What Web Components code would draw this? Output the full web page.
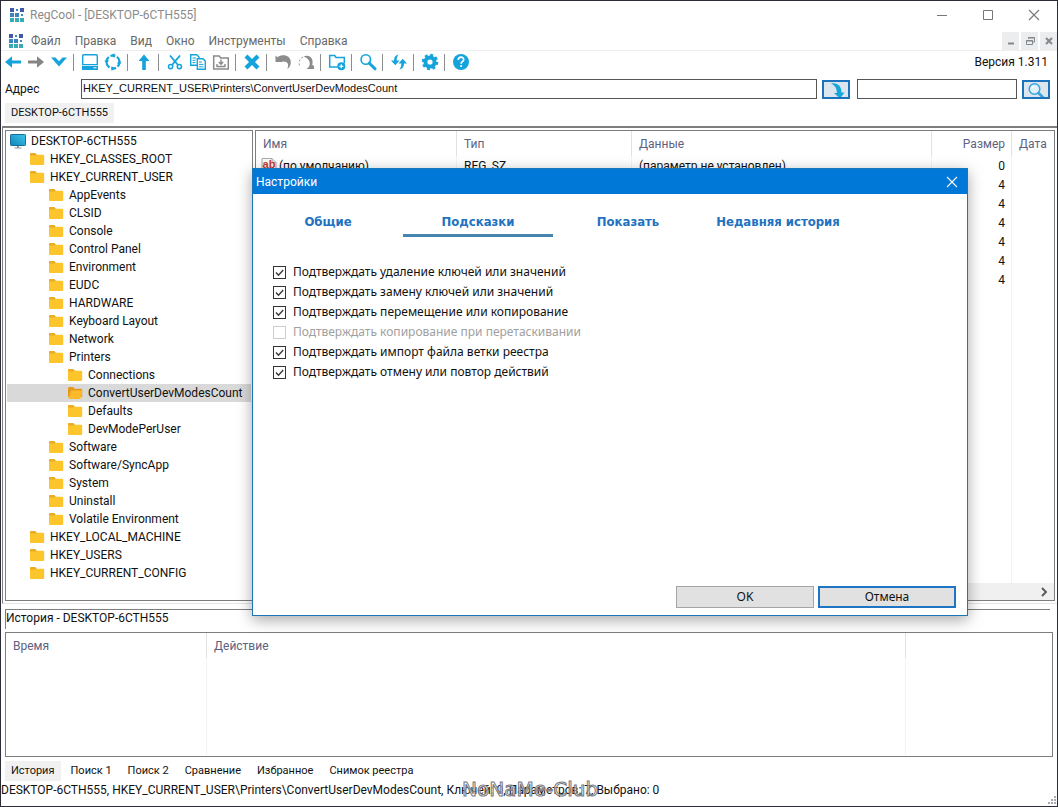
<!DOCTYPE html>
<html lang="ru">
<head>
<meta charset="utf-8">
<title>RegCool - [DESKTOP-6CTH555]</title>
<style>
  html, body { margin: 0; height: 100%; }
  body {
    --ui: Roboto, "Open Sans", sans-serif;
    --wide: "Noto Sans", "Open Sans", sans-serif;
    --classic: "Liberation Sans", Arial, sans-serif;
    --line: #7c7e80;
    --cyan: #14a3dc;
    font: 12px/18px var(--ui);
    color: #111;
    background: #fff;
  }
</style>
</head>
<body>
<reg-app></reg-app>

<script>
const define = (tag, html, setup) => {
  const template = document.createElement('template');
  template.innerHTML = html;
  customElements.define(tag, class extends HTMLElement {
    connectedCallback() {
      if (this.shadowRoot) return;
      this.attachShadow({ mode: 'open' }).append(template.content.cloneNode(true));
      if (setup) setup(this, this.shadowRoot);
    }
  });
};

/* ---------- icons ---------- */
const ICONS = {
  logo: [16, `<path d="M1 1h4v4H1zM11 1h4v4h-4z" fill="#4358a8"/><path d="M1 6h4v4H1zM6 6h4v4H6zM7 2h2v2H7zM12 7h2v2h-2z" fill="#3b86c0"/><path d="M1 11h4v4H1zM6 11h4v4H6zM11 11h4v4h-4z" fill="#38abb4"/>`],
  back: [18, `<path d="M1 9 8 3.300V7.500H17v3H8v4.200z" fill="var(--cyan)"/>`],
  forward: [18, `<path d="M17 9 10 3.300V7.500H1v3h9v4.200z" fill="#858585"/>`],
  down: [18, `<path d="M1 4.500h4.500L9 8.300 12.500 4.500H17L9 13.500z" fill="var(--cyan)"/>`],
  monitor: [18, `<rect x="1.700" y="1.700" width="14.600" height="10" rx="1" fill="#fff" stroke="var(--cyan)" stroke-width="1.400"/><path d="M1 11h16v6H1z" fill="var(--cyan)"/><path d="M1 12.500h16" stroke="#bfe6f6"/><path d="M12.500 14.800h3" stroke="#fff"/>`],
  cycle: [18, `<circle cx="9" cy="9" r="6.500" fill="none" stroke="var(--cyan)" stroke-width="2.200" stroke-dasharray="5 1.800"/><path d="m6.500 2.500 4-2.300v4.600zM15.500 6.500l2 4h-4.500zM11.500 15.500l-4 2.300v-4.600zM2.500 11.500l-2-4h4.500z" fill="var(--cyan)"/>`],
  up: [18, `<path d="m9 1.500 5.500 6.500h-3.700v9H7.200V8H3.500z" fill="var(--cyan)"/>`],
  cut: [18, `<g fill="none" stroke="var(--cyan)"><path d="M4 2.500 12 12M14 2.500 6 12" stroke-width="1.900"/><circle cx="4.600" cy="13.600" r="2.100" stroke-width="1.500"/><circle cx="13.400" cy="13.600" r="2.100" stroke-width="1.500"/></g>`],
  copy: [18, `<g fill="#fff" stroke="var(--cyan)" stroke-width="1.400"><path d="M1.700 1.700h6L10 4v8.300H1.700z"/><path d="M8.300 5.700H14L16.300 8v8.300h-8z"/></g><path d="M3.500 5h3.500M3.500 7.300h3M3.500 9.600h3M10 9h3M10 11.400h4.500M10 13.800h4.500" stroke="var(--cyan)"/>`],
  save: [18, `<path d="M1.700 3h5.500l1.500 2h7.600v11H1.700z" fill="#fff" stroke="#8a8a8a" stroke-width="1.500"/><path d="M9 6.500v4.500M6.800 9 9 11.300 11.200 9M5 11v2.500h8V11" fill="none" stroke="#8a8a8a" stroke-width="1.400"/>`],
  remove: [18, `<path d="m3 3 12 12M15 3 3 15" stroke="var(--cyan)" stroke-width="4.200"/>`],
  undo: [18, `<path d="M1.500 9V2.500L3.500 4.200C9 .5 16.800 2.500 16.800 9.500c0 3-1.300 5-3.500 6.500 2.200-5 .2-8-5.300-7.300L8.500 9z" fill="#8c8c8c"/>`],
  redo: [18, `<path d="M17 16H9.500l2.300-2C14.300 10 12 5 6.500 3.500 13 1 17 6 15.200 11.800L17 13z" fill="#8c8c8c"/><path d="M6 4C2.500 5.500 1 9.500 2.800 13.500" fill="none" stroke="#999" stroke-dasharray="2 2"/>`],
  newfolder: [18, `<path d="M9.500 14H1.700V2.500h5l1.300 2h8.300v6" fill="none" stroke="var(--cyan)" stroke-width="1.500"/><circle cx="13.300" cy="13.300" r="4" fill="var(--cyan)"/><path d="M13.300 11.300v4M11.300 13.300h4" stroke="#fff" stroke-width="1.200"/>`],
  search: [18, `<circle cx="6.800" cy="6.500" r="4.700" fill="#fff" stroke="var(--cyan)" stroke-width="1.600"/><path d="m10.300 10.200 5.700 5.600" stroke="var(--cyan)" stroke-width="3" stroke-linecap="round"/>`],
  refresh: [18, `<path d="M8.500 1.500C5.500 2 4 4.500 4 7.500H1l4.300 4.800L9.500 7.500H6.700c0-2.300.3-4 1.800-6zM9.500 16.500c3-.5 4.500-3 4.500-6h3l-4.300-4.800L8.500 10.500h2.800c0 2.300-.3 4-1.800 6z" fill="var(--cyan)"/>`],
  gear: [18, `<circle cx="9" cy="9" r="4.600" fill="none" stroke="var(--cyan)" stroke-width="4"/><circle cx="9" cy="9" r="7" fill="none" stroke="var(--cyan)" stroke-width="2.600" stroke-dasharray="2.900 2.598"/>`],
  help: [18, `<circle cx="9" cy="9" r="8" fill="var(--cyan)"/><path d="M6.300 7c0-3.800 5.600-3.600 5.400-.3-.1 2-2.600 1.900-2.600 4" fill="none" stroke="#fff" stroke-width="1.700"/><circle cx="9.100" cy="13" r="1.100" fill="#fff"/>`],
  go: [18, `<path d="M4 1.500C11 .5 14.500 4.500 14.500 10.500h3L13 16.500 7 11h2.800C10 7 8.500 3.500 4 1.500z" fill="#15a6dc"/>`],
  find: [18, `<circle cx="7.500" cy="7" r="5.300" fill="#dff1fb" stroke="#38a3df" stroke-width="1.500"/><path d="M5 6.500c.3-1.500 1.200-2.200 2.700-2.500" fill="none" stroke="#fff" stroke-width="1.200"/><path d="m11.500 11 4.500 4.500" stroke="#38a3df" stroke-width="2.600" stroke-linecap="round"/>`],
  folder: [16, `<path d="M1 3.500c0-1 .5-1.500 1.500-1.500h3.600l1.600 1.700h6c1 0 1.500.5 1.500 1.400V12.500c0 1-.5 1.500-1.500 1.500H2.500C1.500 14 1 13.500 1 12.500z" fill="#fbc52b"/><path d="M1 4c0-1.500.5-2 1.500-2h3.600l1.600 1.700L6.500 4.500H1z" fill="#e9ac25"/>`],
  folderopen: [16, `<path d="M1 3.500C1 2.500 1.500 2 2.500 2h3.600l1.600 1.700h6c1 0 1.500.5 1.500 1.400V12H1z" fill="#e8981c"/><path d="M4 5.500h11.500L14 13c-.2.700-.6 1-1.300 1H1.500z" fill="#fbb92b"/>`],
  computer: [16, `<defs><linearGradient id="s" x1="0" y1="1" x2="1" y2="0"><stop stop-color="#1287bb"/><stop offset="1" stop-color="#3cc4ea"/></linearGradient></defs><rect x=".5" y="1.500" width="15" height="11" rx=".8" fill="url(#s)" stroke="#166f96"/><path d="M7 13h2v1.500h2.500v1h-7v-1H7z" fill="#8e9ba3"/>`],
  string: [16, `<path d="M1 .500h10l4 4V15.500H1z" fill="#fafafa" stroke="#aaa"/><path d="M11 .500v4h4" fill="#ddd" stroke="#aaa"/>`],
  min: [12, `<path d="M1 6.500h10" stroke="#777"/>`],
  max: [12, `<path d="M1.500 1.500h9v9h-9z" fill="none" stroke="#777"/>`],
  close: [12, `<path d="m1 1 10 10M11 1 1 11" stroke="currentColor" stroke-width="1.100"/>`],
  mdimin: [12, `<path d="M3 8.500h6" stroke="#83888c" stroke-width="2"/>`],
  mdirest: [12, `<path d="M4.500 4V2.500h6v4.500H9M4 3h7M2.500 5.500h6v4h-6zM2 6h7" fill="none" stroke="#83888c"/>`],
  mdiclose: [12, `<path d="m3 3 6 6M9 3 3 9" stroke="#83888c" stroke-width="2"/>`],
  right: [12, `<path d="m4 2 4 4-4 4" fill="none" stroke="#555" stroke-width="1.800"/>`],
  grip: [10, `<path d="M7 0h2v2H7zM7 3h2v2H7zM7 6h2v2H7zM4 3h2v2H4zM4 6h2v2H4zM1 6h2v2H1z" fill="#a9a9b2"/>`]
};
define('reg-icon', `<style>
  :host { display: inline-block; flex: none; }
  svg { display: block; }
</style>`, (el, root) => {
  const [size, body] = ICONS[el.getAttribute('name')];
  const holder = document.createElement('template');
  holder.innerHTML = `<svg width="${size}" height="${size}" viewBox="0 0 ${size} ${size}" aria-hidden="true">${body}</svg>`;
  root.append(holder.content);
});

/* ---------- title and menu ---------- */
define('title-bar', `<style>
  :host { display: flex; align-items: center; height: 28px; padding-left: 8px; color: #8b8b8b; }
  .title { flex: 1; margin-left: 5px; }
  button { display: grid; place-items: center; width: 46px; height: 28px; padding: 0; border: 0; background: none; color: #777; }
</style>
<reg-icon name="logo"></reg-icon>
<span class="title"><slot></slot></span>
<button aria-label="Свернуть"><reg-icon name="min"></reg-icon></button>
<button aria-label="Развернуть"><reg-icon name="max"></reg-icon></button>
<button aria-label="Закрыть"><reg-icon name="close"></reg-icon></button>`);

define('menu-bar', `<style>
  :host { display: flex; align-items: center; height: 19px; padding: 2px 0 0 7px; border-bottom: 1px solid #eee; color: #686868; }
  nav { display: flex; flex: 1; gap: 14px; margin-left: 7px; }
  .mdi { display: flex; gap: 2px; }
  button { font: inherit; color: inherit; border: 0; padding: 0; background: none; }
  .mdi button { display: grid; place-items: center; width: 17px; height: 18px; background: #ebedef; }
</style>
<reg-icon name="logo"></reg-icon>
<nav>
  <button>Файл</button><button>Правка</button><button>Вид</button><button>Окно</button><button>Инструменты</button><button>Справка</button>
</nav>
<div class="mdi">
  <button aria-label="Свернуть окно"><reg-icon name="mdimin"></reg-icon></button>
  <button aria-label="Восстановить окно"><reg-icon name="mdirest"></reg-icon></button>
  <button aria-label="Закрыть окно"><reg-icon name="mdiclose"></reg-icon></button>
</div>`);

/* ---------- toolbar ---------- */
define('tool-button', `<style>
  :host { display: block; }
  button { display: grid; place-items: center; width: 23px; height: 22px; padding: 0; border: 0; background: none; }
</style><button></button>`, (el, root) => {
  const button = root.querySelector('button');
  button.setAttribute('aria-label', el.getAttribute('label'));
  button.innerHTML = `<reg-icon name="${el.getAttribute('icon')}"></reg-icon>`;
});

define('tool-bar', `<style>
  :host { display: flex; align-items: center; height: 22px; padding: 0 9px 2px 0; }
  i { width: 1px; height: 17px; margin: 0 4px 0 3px; background: #8d8d8d; }
  .version { margin-left: auto; }
</style>
<tool-button icon="back" label="Назад"></tool-button>
<tool-button icon="forward" label="Вперёд"></tool-button>
<tool-button icon="down" label="Переходы"></tool-button><i></i>
<tool-button icon="monitor" label="Компьютер"></tool-button>
<tool-button icon="cycle" label="Сеть"></tool-button><i></i>
<tool-button icon="up" label="Вверх"></tool-button><i></i>
<tool-button icon="cut" label="Вырезать"></tool-button>
<tool-button icon="copy" label="Копировать"></tool-button>
<tool-button icon="save" label="Вставить"></tool-button><i></i>
<tool-button icon="remove" label="Удалить"></tool-button><i></i>
<tool-button icon="undo" label="Отменить"></tool-button>
<tool-button icon="redo" label="Повторить"></tool-button><i></i>
<tool-button icon="newfolder" label="Новый ключ"></tool-button><i></i>
<tool-button icon="search" label="Поиск"></tool-button><i></i>
<tool-button icon="refresh" label="Обновить"></tool-button><i></i>
<tool-button icon="gear" label="Настройки"></tool-button><i></i>
<tool-button icon="help" label="Справка"></tool-button>
<span class="version">Версия 1.311</span>`);

define('address-bar', `<style>
  :host { display: flex; align-items: center; height: 28px; padding: 0 7px 0 4px; }
  label { width: 76px; }
  input { box-sizing: border-box; height: 20px; min-width: 0; margin: 0; padding: 0 1px 3px; border: 1px solid #555; font: 11px/16px var(--classic); color: #111; background: #fff; }
  .path { flex: 1; }
  .find { width: 160px; margin-left: 7px; }
  button { display: grid; place-items: center; box-sizing: border-box; width: 28px; height: 19px; margin-left: 5px; padding: 0; border: 2px solid #1d73bb; background: #dce6ee; overflow: hidden; }
</style>
<label for="path">Адрес</label>
<input id="path" class="path" value="HKEY_CURRENT_USER\\Printers\\ConvertUserDevModesCount">
<button aria-label="Перейти"><reg-icon name="go"></reg-icon></button>
<input class="find" aria-label="Строка поиска">
<button aria-label="Найти"><reg-icon name="find"></reg-icon></button>`);

/* ---------- tab strip ---------- */
define('tab-strip', `<style>
  :host { display: flex; padding-left: 4px; font-size: 11px; }
  button { height: 20px; padding: 0 6px; border: 0; background: none; font: inherit; color: inherit; white-space: nowrap; }
  button[aria-selected=true] { background: #f1f1f1; }
  div { display: flex; gap: 4px; }
</style><div role="tablist"></div>`, (el, root) => {
  const list = root.querySelector('div');
  el.getAttribute('tabs').split('|').forEach((name, i) => {
    const tab = document.createElement('button');
    tab.setAttribute('role', 'tab');
    tab.setAttribute('aria-selected', i === 0);
    tab.textContent = name;
    list.append(tab);
  });
});

/* ---------- registry tree ---------- */
define('tree-item', `<style>
  :host { display: block; }
  .row { display: flex; align-items: center; gap: 5px; height: 18px; white-space: nowrap; }
  :host([selected]) .row { background: #d9d9d9; }
</style><div class="row" role="treeitem"><span></span></div><slot></slot>`, (el, root) => {
  let depth = 0;
  for (let p = el.parentElement; p && p.localName === 'tree-item'; p = p.parentElement) depth++;
  const row = root.querySelector('.row');
  row.style.paddingLeft = `${3 + depth * 19}px`;
  const icon = document.createElement('reg-icon');
  icon.setAttribute('name', el.getAttribute('icon') || 'folder');
  row.prepend(icon);
  row.querySelector('span').textContent = el.getAttribute('label');
});
const item = (label, inner = '', extra = '') => `<tree-item label="${label}" ${extra}>${inner}</tree-item>`;
define('registry-tree', `<style>
  :host { display: block; box-sizing: border-box; padding: 1px; border: 1px solid var(--line); overflow: hidden; }
</style><div role="tree">${
  item('DESKTOP-6CTH555',
    item('HKEY_CLASSES_ROOT') +
    item('HKEY_CURRENT_USER',
      ['AppEvents', 'CLSID', 'Console', 'Control Panel', 'Environment', 'EUDC', 'HARDWARE', 'Keyboard Layout', 'Network'].map(n => item(n)).join('') +
      item('Printers', item('Connections') + item('ConvertUserDevModesCount', '', 'icon="folderopen" selected') + item('Defaults') + item('DevModePerUser')) +
      ['Software', 'Software/SyncApp', 'System', 'Uninstall', 'Volatile Environment'].map(n => item(n)).join('')) +
    item('HKEY_LOCAL_MACHINE') + item('HKEY_USERS') + item('HKEY_CURRENT_CONFIG'),
    'icon="computer"')
}</div>`);

/* ---------- value list ---------- */
define('value-list', `<style>
  :host { display: flex; flex-direction: column; box-sizing: border-box; min-width: 0; border: 1px solid var(--line); }
  .body { flex: 1; }
  table { width: 100%; height: 100%; table-layout: fixed; border-collapse: separate; border-spacing: 0; }
  th, td { height: 19px; padding: 0 6px 0 7px; text-align: left; font-weight: normal; white-space: nowrap; overflow: hidden; border-right: 1px solid #f3f3f3; box-sizing: border-box; }
  th { height: 25px; color: #5d6282; border-color: #e2e2e6; }
  td:first-child { padding-left: 5px; }
  th:last-child, td:last-child { padding-right: 0; border-right: 0; }
  th:nth-child(4), td:nth-child(4) { text-align: right; }
  .rest td { height: auto; }
  .name { display: flex; align-items: center; gap: 2px; }
  .ab { display: grid; width: 16px; height: 16px; }
  .ab > * { grid-area: 1 / 1; }
  .ab b { font: bold 11px/13px var(--classic); color: #c63a32; text-align: center; }
  .scroll { display: flex; align-items: center; justify-content: flex-end; height: 17px; padding-right: 4px; background: #f0f0f0; }
</style>
<div class="body"><table>
  <colgroup><col style="width:201px"><col style="width:175px"><col><col style="width:80px"><col style="width:42px"></colgroup>
  <thead><tr><th>Имя</th><th>Тип</th><th>Данные</th><th>Размер</th><th>Дата</th></tr></thead>
  <tbody>
    <tr><td><span class="name"><span class="ab"><reg-icon name="string"></reg-icon><b>ab</b></span>(по умолчанию)</span></td><td>REG_SZ</td><td>(параметр не установлен)</td><td>0</td><td></td></tr>
    ${'<tr><td></td><td></td><td></td><td>4</td><td></td></tr>'.repeat(6)}
    <tr class="rest"><td></td><td></td><td></td><td></td><td></td></tr>
  </tbody>
</table></div>
<div class="scroll"><reg-icon name="right"></reg-icon></div>`);

/* ---------- history ---------- */
define('history-panel', `<style>
  :host { display: block; padding: 0 4px; }
  h2 { margin: 0 3px 3px 0; height: 19px; font: 12px/17px var(--ui); border: solid var(--line); border-width: 1px 0 0 1px; }
  table { width: 100%; height: 125px; table-layout: fixed; border: 1px solid var(--line); border-spacing: 0; box-sizing: border-box; }
  th, td { padding: 0 7px; text-align: left; font-weight: normal; border-right: 1px solid #f3f3f3; }
  th { height: 25px; color: #5d6282; border-color: #e2e2e6; }
  th:last-child, td:last-child { border-right: 0; }
</style>
<h2>История - DESKTOP-6CTH555</h2>
<table>
  <colgroup><col style="width:201px"><col><col style="width:146px"></colgroup>
  <thead><tr><th>Время</th><th>Действие</th><th></th></tr></thead>
  <tbody><tr><td></td><td></td><td></td></tr></tbody>
</table>`);

/* ---------- status bar ---------- */
define('status-bar', `<style>
  :host { display: flex; align-items: flex-start; height: 25px; position: relative; }
  .text { flex: 1; white-space: nowrap; }
  .mark { position: absolute; left: 461px; top: -4px; font: 20px/24px "DejaVu Sans", sans-serif; color: rgba(255,255,255,.6); -webkit-text-stroke: 1px #77777c; }
  reg-icon { align-self: flex-end; }
</style>
<span class="text">DESKTOP-6CTH555, HKEY_CURRENT_USER\\Printers\\ConvertUserDevModesCount, Ключей: 0, Параметров: 7, Выбрано: 0</span>
<span class="mark">NoNaMe-Club</span>
<reg-icon name="grip"></reg-icon>`);

/* ---------- settings dialog ---------- */
define('check-option', `<style>
  :host { display: block; height: 20px; font-family: var(--wide); }
  label { display: flex; align-items: center; gap: 7px; line-height: 20px; }
  .box { display: grid; width: 13px; height: 13px; }
  .box > * { grid-area: 1 / 1; }
  input { appearance: none; box-sizing: border-box; width: 13px; height: 13px; margin: 0; border: 1px solid #333; background: #fff; }
  svg { display: none; pointer-events: none; }
  input:checked + svg { display: block; }
  input:disabled { border-color: #ccc; }
  :host([disabled]) { color: #a0a0a0; }
</style>
<label><span class="box"><input type="checkbox"><svg width="13" height="13" aria-hidden="true"><path d="m3 6.500 2.500 2.700L10.200 4" fill="none" stroke="#333" stroke-width="1.300"/></svg></span><slot></slot></label>`, (el, root) => {
  const input = root.querySelector('input');
  input.checked = el.hasAttribute('checked');
  input.disabled = el.hasAttribute('disabled');
});

define('settings-dialog', `<style>
  :host { display: flex; flex-direction: column; box-sizing: border-box; border: 1px solid #1b76b5; background: #fff; box-shadow: 0 4px 14px rgba(0,0,0,.35); }
  header { display: flex; align-items: center; height: 25px; padding-left: 3px; background: #0078d7; color: #fff; }
  header span { flex: 1; }
  header button { display: grid; place-items: center; width: 31px; height: 25px; padding: 0; border: 0; background: none; color: #fff; }
  .tabs { display: flex; }
  .tabs button { width: 150px; height: 43px; padding: 16px 0 0; border: 0; border-bottom: 3px solid transparent; background: none; font: bold 13px/16px "DejaVu Sans Condensed", "DejaVu Sans", sans-serif; color: #2272c0; }
  .tabs button[aria-selected=true] { border-color: #4585ae; }
  .options { flex: 1; padding: 25px 20px; }
  footer { display: flex; justify-content: flex-end; gap: 4px; padding: 0 11px 7px 0; }
  footer button { box-sizing: border-box; width: 138px; height: 22px; padding: 0; border: 1px solid #a5a5a5; background: #e1e1e1; font: 12px/18px var(--wide); color: #111; }
  footer button.default { border: 2px solid #1d75c4; }
</style>
<header><span>Настройки</span><button aria-label="Закрыть настройки"><reg-icon name="close"></reg-icon></button></header>
<div class="tabs" role="tablist">
  <button role="tab">Общие</button><button role="tab" aria-selected="true">Подсказки</button><button role="tab">Показать</button><button role="tab">Недавняя история</button>
</div>
<div class="options">
  <check-option checked>Подтверждать удаление ключей или значений</check-option>
  <check-option checked>Подтверждать замену ключей или значений</check-option>
  <check-option checked>Подтверждать перемещение или копирование</check-option>
  <check-option disabled>Подтверждать копирование при перетаскивании</check-option>
  <check-option checked>Подтверждать импорт файла ветки реестра</check-option>
  <check-option checked>Подтверждать отмену или повтор действий</check-option>
</div>
<footer><button>OK</button><button class="default">Отмена</button></footer>`);

/* ---------- application window ---------- */
define('reg-app', `<style>
  :host { display: flex; flex-direction: column; box-sizing: border-box; min-height: 100vh; position: relative; border: 1px solid #2c2c36; overflow: hidden; }
  main { display: grid; grid-template-columns: 248px 1fr; gap: 2px; flex: 1; margin: 3px 0 0 1px; padding: 2px; border: solid var(--line); border-width: 2px 0 0 1px; border-bottom: 1px solid #e4e4e4; }
  history-panel { margin-top: 5px; }
  .bottom { padding: 4px 4px 0; }
  .pane { height: 20px; }
  settings-dialog { position: absolute; left: 251px; top: 167px; width: 716px; height: 448px; }
</style>
<title-bar>RegCool - [DESKTOP-6CTH555]</title-bar>
<menu-bar></menu-bar>
<tool-bar></tool-bar>
<address-bar></address-bar>
<tab-strip class="pane" tabs="DESKTOP-6CTH555"></tab-strip>
<main>
  <registry-tree></registry-tree>
  <value-list></value-list>
</main>
<history-panel></history-panel>
<tab-strip class="bottom" tabs="История|Поиск 1|Поиск 2|Сравнение|Избранное|Снимок реестра"></tab-strip>
<status-bar></status-bar>
<settings-dialog></settings-dialog>`);
</script>
</body>
</html>
